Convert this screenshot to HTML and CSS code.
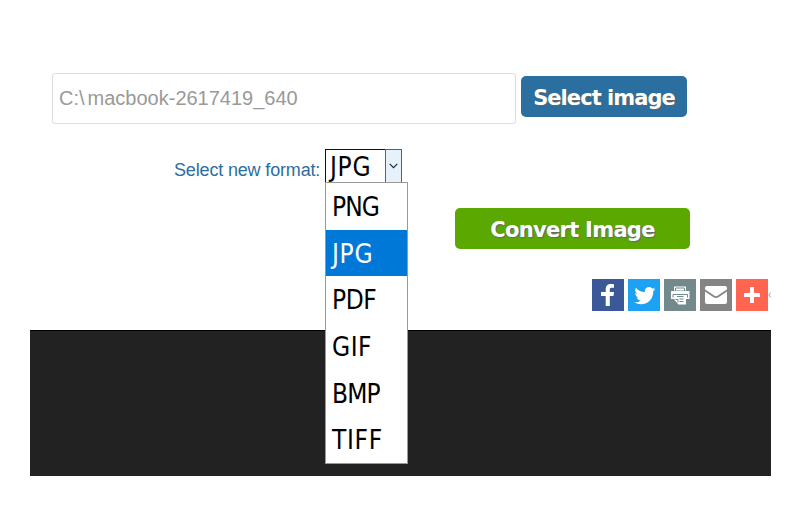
FILE: index.html
```
<!DOCTYPE html>
<html lang="en">
  <head>
    <meta charset="UTF-8" />
    <meta name="viewport" content="width=device-width, initial-scale=1.0">
    <title>Convert Image</title>
    <link rel="stylesheet" href="styles.css">
  </head>
  <body>
    <div class="page">
      <form class="converter">
        <div class="file-row">
          <div class="file-name"><span class="drive">C:\</span><span>macbook-2617419_640</span></div>
          <button type="button" class="btn btn-select"><span>Select image</span></button>
        </div>
        <div class="format-row">
          <span class="format-label">Select new format:</span>
          <div class="select">
            <div class="select-value"><span>JPG</span></div>
            <div class="select-arrow">
              <svg width="9" height="6" viewBox="0 0 9 6"><path d="M.7.8 4.5 4.6 8.3.8" fill="none" stroke="#222" stroke-width="1.1"/></svg>
            </div>
            <ul class="options">
              <li class="tight"><span>PNG</span></li>
              <li class="selected"><span>JPG</span></li>
              <li class="medium"><span>PDF</span></li>
              <li><span>GIF</span></li>
              <li class="tight"><span>BMP</span></li>
              <li class="loose"><span>TIFF</span></li>
            </ul>
          </div>
        </div>
        <div class="convert-row">
          <button type="button" class="btn btn-convert"><span>Convert Image</span></button>
        </div>
      </form>
      <div class="share">
        <a class="share-btn facebook"><svg viewBox="0 0 32 32"><path fill="#fff" d="M17.800 27V17h3.700l.5-4h-4.200v-2.300c0-1.200.4-1.900 1.900-1.900H22V5.200c-.4 0-1.700-.2-3.100-.2-3.100 0-5.200 1.900-5.200 5.200V13H9v4h4.700v10z"/></svg></a>
        <a class="share-btn twitter"><svg viewBox="0 0 32 32"><path fill="#fff" transform="translate(2.800 2.500) scale(.88)" d="M28 8.600a9.900 9.900 0 0 1-2.800.8 4.900 4.900 0 0 0 2.200-2.700c-1 .6-2 1-3.100 1.200a4.900 4.900 0 0 0-8.500 3.300c0 .4 0 .8.1 1.100-4-.2-7.700-2.100-10.100-5.100a4.900 4.900 0 0 0 1.500 6.600c-.8 0-1.600-.2-2.200-.6v.1c0 2.400 1.700 4.400 3.900 4.800a4.900 4.900 0 0 1-2.200.1 4.900 4.900 0 0 0 4.600 3.400A9.900 9.900 0 0 1 4 23.600a13.900 13.900 0 0 0 7.500 2.200c9.100 0 14-7.500 14-14v-.6A10 10 0 0 0 28 8.600z"/></svg></a>
        <a class="share-btn print"><svg viewBox="0 0 32 32"><path fill="#fff" d="M10 7.500h12v4H10zM7 12h18.500v8H22v5.500h-7.500L10.500 21v-1H7z"/><path fill="none" stroke="#738a8d" d="M11.500 12V9h9v3M9 18.500v-3h14.500v3M13 17.500h6.500M15.500 20h4M15.500 22.500h4M11.500 20.500h2.500v3"/></svg></a>
        <a class="share-btn email"><svg viewBox="0 0 32 32"><rect x="5" y="7" width="22" height="18" rx="2" fill="#fff"/><path d="M4.700 11.300 14 17.500q2 1.300 4 0l9.300-6.200" fill="none" stroke="#848484" stroke-width="1.700"/></svg></a>
        <a class="share-btn more"><svg viewBox="0 0 32 32"><path fill="#fff" d="M14 8h4v6h6v4h-6v6h-4v-6H8v-4h6z"/></svg></a>
        <span class="share-next"><svg width="3" height="6" viewBox="0 0 3 6"><path d="M3 .5.700 3 3 5.500" fill="none" stroke="#999"/></svg></span>
      </div>
      <div class="footer"></div>
    </div>
  </body>
</html>
```

FILE: styles.css
```
* {
  box-sizing: border-box;
}
body {
  margin: 0;
  background: #fff;
  font-family: "Liberation Sans", Arial, sans-serif;
}
.page {
  width: 741px;
  margin-left: 30px;
  padding-top: 73px;
}
.converter {
  height: 206px;
  padding-left: 22px;
}

.file-row {
  display: flex;
  gap: 5px;
  height: 51px;
}
.file-name {
  display: flex;
  align-items: center;
  width: 464px;
  padding: 0 6px;
  border: 1px solid #ddd;
  border-radius: 3px;
  color: #999;
  font-size: 20px;
}
.drive {
  margin-right: 3px;
}

.btn {
  height: 41px;
  padding: 2px 0 0;
  border: 0;
  border-radius: 5px;
  color: #fff;
  font-family: "DejaVu Sans", Verdana, sans-serif;
  font-weight: bold;
  font-size: 21px;
  letter-spacing: -0.7px;
  white-space: nowrap;
  text-shadow: 1px 1px 1px #666;
}
.btn-select {
  width: 166px;
  margin-top: 3px;
  background: #2b6ea0;
  letter-spacing: -0.95px;
}
.btn-convert {
  width: 235px;
  background: #5aa800;
}

.format-row {
  display: flex;
  align-items: flex-start;
  height: 59px;
  margin-top: 25px;
  padding-left: 122px;
}
.format-label {
  width: 151px;
  padding-top: 11px;
  color: #2b6ea0;
  font-size: 18px;
  letter-spacing: -0.16px;
  line-height: 21px;
  white-space: nowrap;
}
.select {
  position: relative;
  display: flex;
  width: 77px;
  height: 34px;
  font-family: "DejaVu Sans Condensed", "DejaVu Sans", Tahoma, sans-serif;
  font-size: 26px;
  color: #000;
}
.select-value {
  width: 60px;
  padding-left: 4px;
  border: 1px solid #111;
  border-right: 0;
  letter-spacing: 0.7px;
  line-height: 34px;
}
.select-arrow {
  display: flex;
  align-items: center;
  justify-content: center;
  width: 17px;
  border: 1px solid #0078d7;
  background: #e5f1fb;
}
.options {
  position: absolute;
  top: 33px;
  left: 0;
  z-index: 1;
  display: grid;
  grid-template-rows: 47px 46px 47px 47px 46px 47px;
  width: 83px;
  height: 282px;
  margin: 0;
  padding: 0;
  border: 1px solid #999;
  background: #fff;
  list-style: none;
}
.options li {
  padding-left: 6px;
  letter-spacing: 0.5px;
  line-height: 48px;
}
.options .selected {
  background: #0078d7;
  color: #fff;
  letter-spacing: 0.7px;
}
.options .tight {
  letter-spacing: -0.9px;
}
.options .medium {
  letter-spacing: -0.4px;
}
.options .loose {
  letter-spacing: 0.7px;
}

.convert-row {
  padding-left: 403px;
}

.share {
  display: flex;
  gap: 4px;
  height: 51px;
  padding-left: 562px;
}
.share-btn {
  width: 32px;
  height: 32px;
}
.share-btn svg {
  display: block;
}
.facebook {
  background: #3b5998;
}
.twitter {
  background: #1da1f2;
}
.print {
  background: #738a8d;
}
.email {
  background: #848484;
}
.more {
  background: #ff6550;
}
.share-next {
  margin-left: -4px;
  padding-top: 13px;
}
.share-next svg {
  display: block;
}

.footer {
  height: 146px;
  border-top: 1px solid #000;
  background: #222;
}
```
